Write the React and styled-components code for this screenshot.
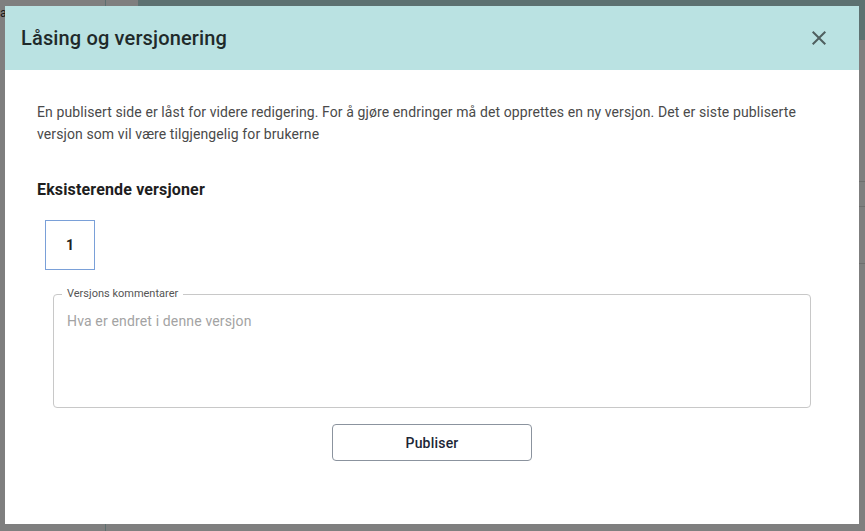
import styled, { createGlobalStyle } from "styled-components";

const GlobalStyle = createGlobalStyle`
	html, body {
		margin: 0;
		padding: 0;
		height: 100%;
	}
	body {
		font-family: Roboto, "Liberation Sans", sans-serif;
		overflow: hidden;
	}
	#root {
		height: 100%;
	}
`;

const Page = styled.div`
	position: relative;
	width: 100vw;
	height: 100vh;
	display: flex;
	background: #fff;
`;

const Sidebar = styled.div`
	width: 105px;
	border-right: 1px solid #bcdede;
	overflow: hidden;
	white-space: nowrap;
	font-size: 12px;
	color: #333;
	padding-top: 6px;
`;

const Main = styled.div`
	flex: 1;
	display: flex;
	flex-direction: column;
`;

const TopBar = styled.div`
	height: 40px;
	margin-left: 32px;
	background: #bae2e2;
`;

const Rows = styled.div`
	display: flex;
	flex-direction: column;
	padding-top: 85px;
`;

const Row = styled.div`
	height: ${(p) => p.h}px;
	border-bottom: 1px solid #ddd;
`;

const Backdrop = styled.div`
	position: absolute;
	inset: 0;
	background: rgba(0, 0, 0, 0.5);
`;

const Dialog = styled.div`
	position: absolute;
	left: 5px;
	top: 6px;
	width: 854px;
	height: 518px;
	background: #fff;
	display: flex;
	flex-direction: column;
`;

const Header = styled.div`
	height: 64px;
	background: #bae2e2;
	display: flex;
	align-items: center;
	justify-content: space-between;
	padding: 0 20px 0 16px;
`;

const Title = styled.h2`
	margin: 0;
	font-size: 20px;
	font-weight: 500;
	color: #1f2a2a;
	letter-spacing: 0.15px;
`;

const CloseButton = styled.button`
	width: 40px;
	height: 40px;
	border: none;
	background: transparent;
	display: flex;
	align-items: center;
	justify-content: center;
	padding: 0;
	cursor: pointer;
	color: #4f5f5f;
`;

const Body = styled.div`
	padding: 31px 32px 0;
	display: flex;
	flex-direction: column;
`;

const Intro = styled.p`
	margin: 0;
	font-size: 14px;
	line-height: 22px;
	letter-spacing: 0.1px;
	color: #4a4a4a;
`;

const SectionTitle = styled.h3`
	margin: 35px 0 0;
	font-size: 16px;
	font-weight: 700;
	letter-spacing: 0.15px;
	color: #1e1e1e;
`;

const Versions = styled.div`
	display: flex;
	gap: 8px;
	margin: 21px 0 0 8px;
`;

const VersionBox = styled.div`
	width: 50px;
	height: 50px;
	box-sizing: border-box;
	border: 1px solid ${(p) => (p.active ? "#7aa0d8" : "#ccc")};
	display: flex;
	align-items: center;
	justify-content: center;
	font-size: 14px;
	font-weight: 700;
	color: #222;
`;

const Field = styled.fieldset`
	margin: 18px 16px 0;
	padding: 0 8px;
	border: 1px solid #c8c8c8;
	border-radius: 4px;
	height: 120px;
	box-sizing: border-box;
`;

const Legend = styled.legend`
	font-size: 11px;
	color: #555;
	padding: 0 5px;
	line-height: 12px;
`;

const TextArea = styled.textarea`
	border: none;
	outline: none;
	resize: none;
	width: 100%;
	box-sizing: border-box;
	height: 80px;
	padding: 13px 5px 0;
	font-family: inherit;
	font-size: 14px;
	letter-spacing: 0.15px;
	color: #333;
	&::placeholder {
		color: #a3a3a3;
	}
`;

const Actions = styled.div`
	display: flex;
	justify-content: center;
	margin-top: 16px;
`;

const Button = styled.button`
	width: 200px;
	height: 37px;
	border: 1px solid #8b939e;
	border-radius: 4px;
	background: #fff;
	font-family: inherit;
	font-size: 14px;
	font-weight: 500;
	letter-spacing: 0.2px;
	color: #1c2636;
	cursor: pointer;
`;

export default function App() {
	return (
		<>
			<GlobalStyle />
			<Page>
				<Sidebar>a</Sidebar>
				<Main>
					<TopBar />
					<Rows>
						<Row h={56} />
						<Row h={24} />
						<Row h={56} />
					</Rows>
				</Main>
				<Backdrop />
				<Dialog>
					<Header>
						<Title>Låsing og versjonering</Title>
						<CloseButton aria-label="Lukk">
							<svg width="24" height="24" viewBox="0 0 24 24" fill="currentColor">
								<path d="M19 6.41 17.59 5 12 10.59 6.41 5 5 6.41 10.59 12 5 17.59 6.41 19 12 13.41 17.59 19 19 17.59 13.41 12z" />
							</svg>
						</CloseButton>
					</Header>
					<Body>
						<Intro>
							En publisert side er låst for videre redigering. For å gjøre endringer må det opprettes en ny versjon. Det er siste publiserte
							versjon som vil være tilgjengelig for brukerne
						</Intro>
						<SectionTitle>Eksisterende versjoner</SectionTitle>
						<Versions>
							<VersionBox active>1</VersionBox>
						</Versions>
						<Field>
							<Legend>Versjons kommentarer</Legend>
							<TextArea placeholder="Hva er endret i denne versjon" />
						</Field>
						<Actions>
							<Button>Publiser</Button>
						</Actions>
					</Body>
				</Dialog>
			</Page>
		</>
	);
}
